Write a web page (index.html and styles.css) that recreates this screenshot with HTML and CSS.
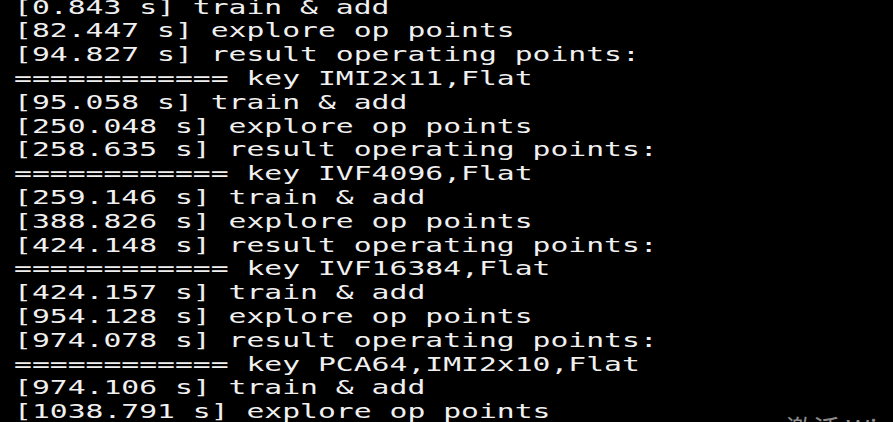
FILE: index.html
```html
<!DOCTYPE html>
<html>
<head>
<meta charset="utf-8">
<link rel="stylesheet" href="styles.css">
</head>
<body>
<div class="term">
<pre class="log">[0.843 s] train &amp; add
[82.447 s] explore op points
[94.827 s] result operating points:
============ key IMI2x11,Flat
[95.058 s] train &amp; add
[250.048 s] explore op points
[258.635 s] result operating points:
============ key IVF4096,Flat
[259.146 s] train &amp; add
[388.826 s] explore op points
[424.148 s] result operating points:
============ key IVF16384,Flat
[424.157 s] train &amp; add
[954.128 s] explore op points
[974.078 s] result operating points:
============ key PCA64,IMI2x10,Flat
[974.106 s] train &amp; add
[1038.791 s] explore op points</pre>
<div class="watermark">激活 Windows</div>
</div>
</body>
</html>
```
FILE: styles.css
```css
html, body {
  margin: 0;
  padding: 0;
  background: #000;
  width: 893px;
  height: 422px;
  overflow: hidden;
}
.term {
  position: relative;
  width: 893px;
  height: 422px;
  overflow: hidden;
  background: #000;
}
.log {
  margin: -4.4px 0 0 14px;
  font-family: "DejaVu Sans Mono", monospace;
  font-size: 20px;
  line-height: 23.8px;
  color: #f0f0f0;
  white-space: pre;
  transform: scaleX(1.485);
  transform-origin: 0 0;
}
.watermark {
  position: absolute;
  left: 786px;
  top: 415px;
  font-family: "Noto Sans CJK SC", "Noto Sans", sans-serif;
  font-size: 27px;
  line-height: 27px;
  color: #8c8c8c;
  white-space: nowrap;
}
```
